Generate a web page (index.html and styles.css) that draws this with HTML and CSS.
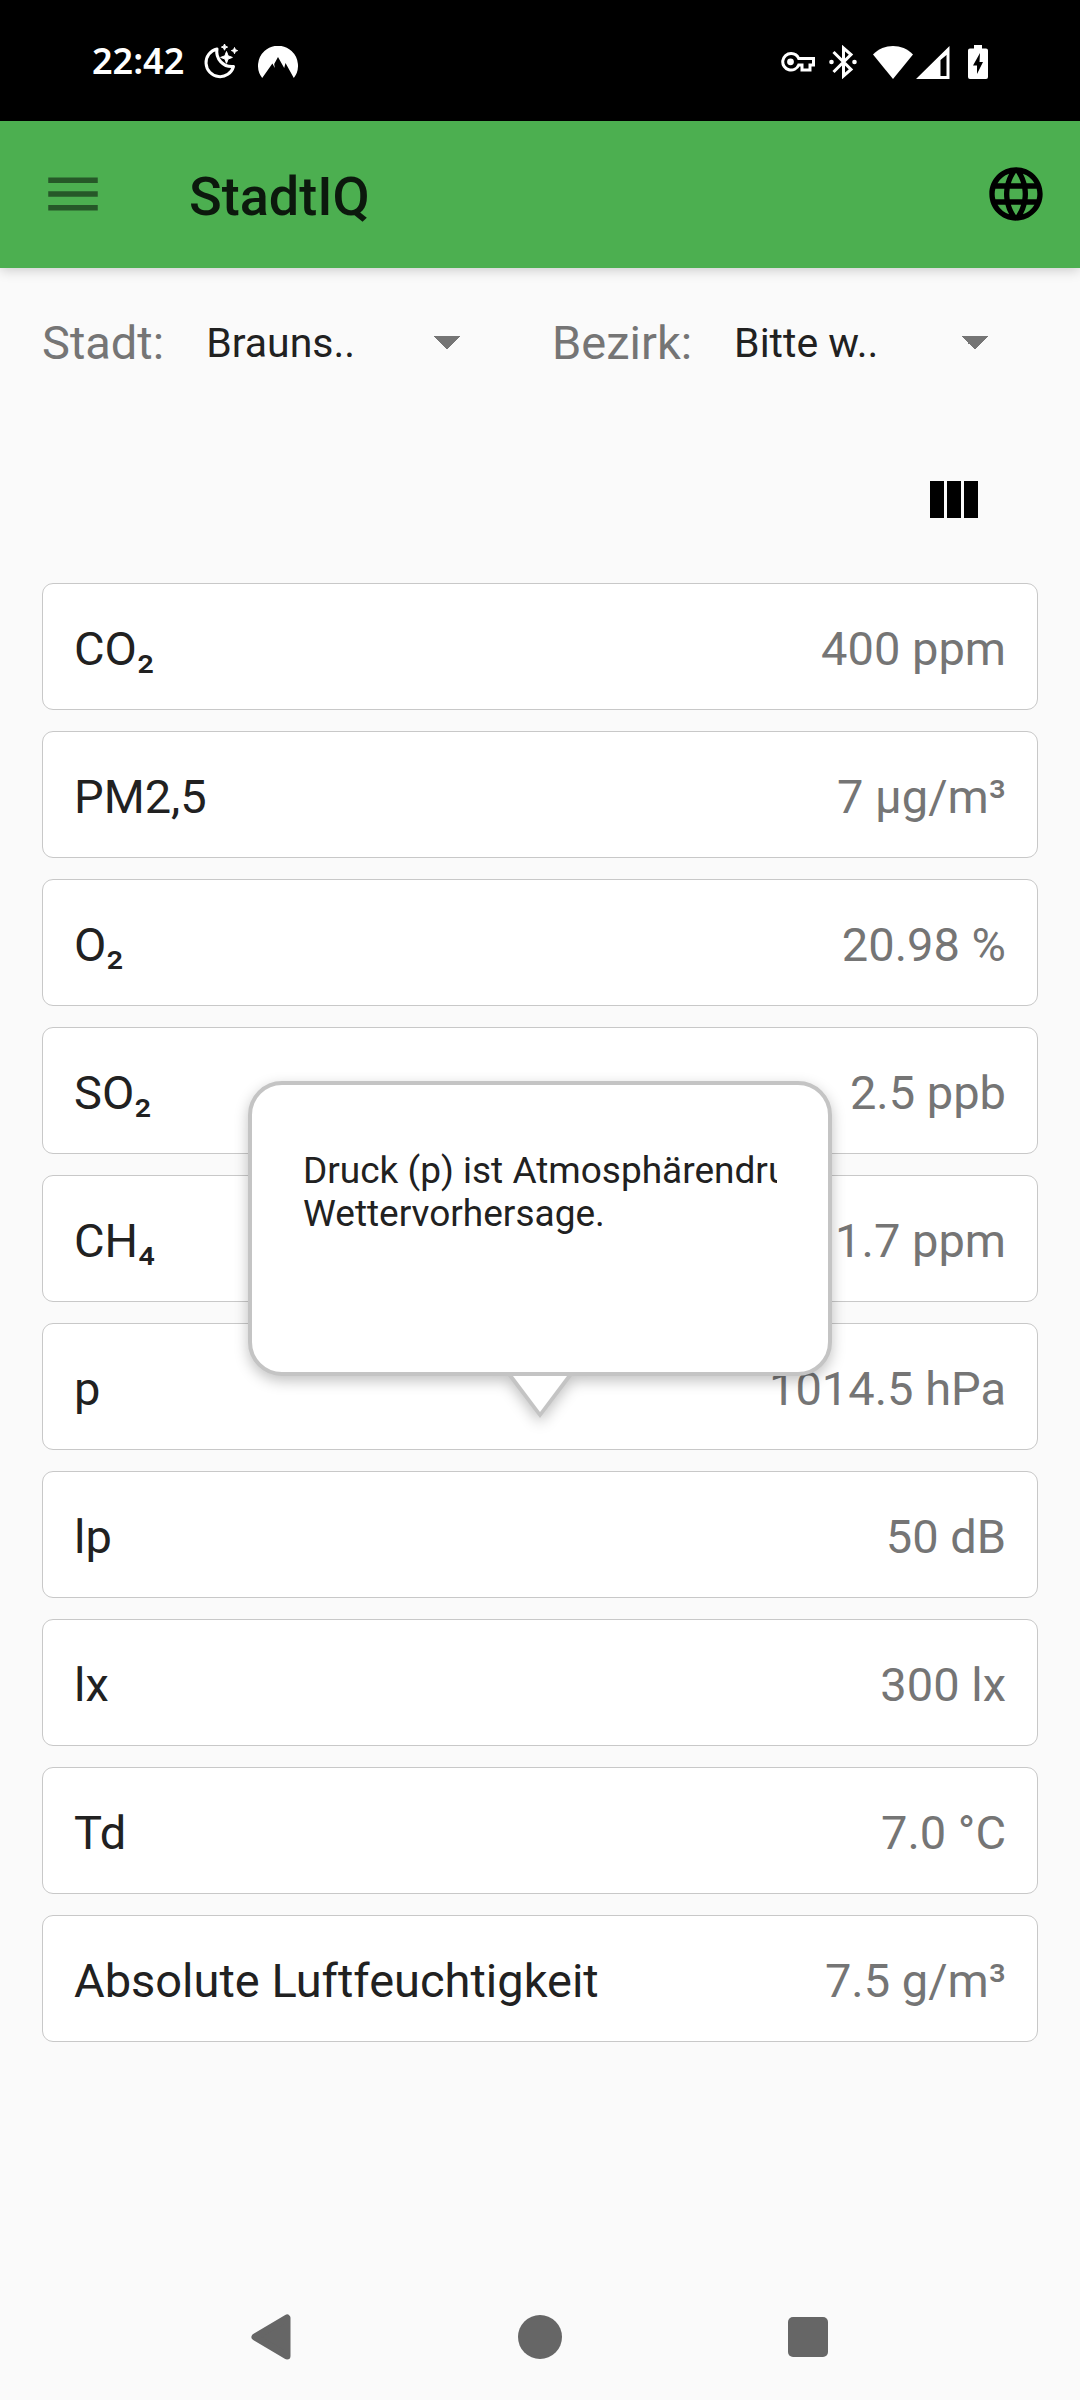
FILE: index.html
```html
<!DOCTYPE html>
<html lang="de">
<head>
<meta charset="utf-8">
<meta name="viewport" content="width=device-width, initial-scale=1">
<title>StadtIQ</title>
<link rel="stylesheet" href="styles.css">
</head>
<body>
<div class="screen">
  <div class="status">
    <div class="status-left">
      <time class="clock">22:42</time>
      <svg class="moon" viewBox="0 0 34 36" width="34" height="36" aria-hidden="true">
        <path d="M13 5A14 14 0 1 0 29.500 22.500A15 15 0 0 1 13 5Z" fill="none" stroke="#fff" stroke-width="3" stroke-linejoin="round"/>
        <path d="M22.500 7.500l1.600 4.300 4.300 1.600-4.300 1.600-1.600 4.300-1.600-4.300-4.300-1.600 4.300-1.600zM20.500 0l.9 2.200 2.200.9-2.200.9-.9 2.200-.9-2.200-2.200-.9 2.200-.9zM30.500 3.500l.9 2.200 2.200.9-2.200.9-.9 2.200-.9-2.200-2.200-.9 2.200-.9z" fill="#fff" stroke="#fff" stroke-width="1"/>
      </svg>
      <svg class="peak" viewBox="0 0 40 32" width="40" height="32" aria-hidden="true">
        <path d="M4.200 32A20 20 0 1 1 35.800 32L27.500 17l-1.300 5L20 11l-3.800 7 .6 4-2.400-4.500z" fill="#fff"/>
      </svg>
    </div>
    <div class="status-right">
      <svg viewBox="0 0 34 20" width="34" height="20" aria-hidden="true">
        <path d="M10 1.500a8.300 8.300 0 1 0 7.700 11.500H21v5h8v-5h3.500V6.500H17.700A8.300 8.300 0 0 0 10 1.500Z" fill="none" stroke="#fff" stroke-width="3"/>
        <circle cx="9.500" cy="9.800" r="3.400" fill="#fff"/>
      </svg>
      <svg class="bt" viewBox="0 0 28 34" width="28" height="34" aria-hidden="true">
        <path d="M4.500 7L22 24.500 14.500 31V3L22 9.500 4.500 27" fill="none" stroke="#fff" stroke-width="3"/>
        <circle cx="2.500" cy="17" r="2.300" fill="#fff"/><circle cx="25.500" cy="17" r="2.300" fill="#fff"/>
      </svg>
      <svg class="wifi" viewBox="0 0 40 33" width="40" height="33" aria-hidden="true">
        <path d="M20 33L0 8.500C11-2.800 29-2.800 40 8.500z" fill="#fff"/>
      </svg>
      <svg class="signal" viewBox="0 0 34 33" width="34" height="33" aria-hidden="true">
        <path d="M33.500 0v33H0zM30.500 9L24.500 14v16h6z" fill="#fff" fill-rule="evenodd"/>
      </svg>
      <svg class="battery" viewBox="0 0 20 34" width="20" height="34" aria-hidden="true">
        <path d="M6 0h8v3.500h4a2 2 0 0 1 2 2V32a2 2 0 0 1-2 2H2a2 2 0 0 1-2-2V5.500a2 2 0 0 1 2-2h4zM12 8L5 20.500h4V29l6-12h-3.500z" fill="#fff" fill-rule="evenodd"/>
      </svg>
    </div>
  </div>

  <header class="appbar">
    <button class="icon-button" type="button" aria-label="Menü">
      <svg class="menu-icon" viewBox="0 0 24 24" width="66" height="66"><path d="M3 18h18v-2H3zM3 13h18v-2H3zM3 6v2h18V6z"/></svg>
    </button>
    <h1 class="title">StadtIQ</h1>
    <button class="icon-button" type="button" aria-label="Sprache">
      <svg viewBox="0 0 24 24" width="64" height="64"><path d="M11.990 2C6.470 2 2 6.480 2 12s4.470 10 9.990 10C17.520 22 22 17.520 22 12S17.520 2 11.990 2zm6.930 6h-2.950a15.650 15.650 0 0 0-1.380-3.560A8.030 8.030 0 0 1 18.920 8zM12 4.040c.83 1.200 1.480 2.530 1.910 3.960h-3.820c.43-1.430 1.080-2.760 1.910-3.960zM4.260 14C4.100 13.360 4 12.690 4 12s.1-1.360.26-2h3.380c-.08.66-.14 1.320-.14 2s.06 1.340.14 2zm.82 2h2.950c.32 1.250.78 2.450 1.380 3.560A7.990 7.990 0 0 1 5.080 16zm2.950-8H5.080a7.990 7.990 0 0 1 4.330-3.560A15.650 15.650 0 0 0 8.030 8zM12 19.960c-.83-1.200-1.480-2.530-1.910-3.960h3.820c-.43 1.430-1.080 2.760-1.910 3.960zM14.340 14H9.660c-.09-.66-.16-1.320-.16-2s.07-1.350.16-2h4.680c.09.65.16 1.320.16 2s-.07 1.340-.16 2zm.25 5.560c.6-1.110 1.060-2.310 1.380-3.560h2.950a8.030 8.030 0 0 1-4.330 3.560zM16.360 14c.08-.66.14-1.320.14-2s-.06-1.340-.14-2h3.380c.16.640.26 1.310.26 2s-.1 1.360-.26 2z"/></svg>
    </button>
  </header>

  <main class="content">
    <form class="filters">
      <div class="filter filter-city">
        <label class="filter-label" for="stadt">Stadt:</label>
        <select class="filter-select" id="stadt"><option>Brauns..</option></select>
      </div>
      <div class="filter">
        <label class="filter-label" for="bezirk">Bezirk:</label>
        <select class="filter-select" id="bezirk"><option>Bitte w..</option></select>
      </div>
    </form>

    <div class="toolbar">
      <button class="icon-button" type="button" aria-label="Spaltenansicht">
        <svg viewBox="0 0 48 37" width="48" height="37"><path d="M0 0h14v37H0zM17 0h14v37H17zM34 0h14v37H34z"/></svg>
      </button>
    </div>

    <ul class="readings">
      <li class="reading"><span>CO₂</span><span class="value">400 ppm</span></li>
      <li class="reading"><span>PM2,5</span><span class="value">7 µg/m³</span></li>
      <li class="reading"><span>O₂</span><span class="value">20.98 %</span></li>
      <li class="reading"><span>SO₂</span><span class="value">2.5 ppb</span></li>
      <li class="reading"><span>CH₄</span><span class="value">1.7 ppm</span></li>
      <li class="reading"><span>p</span><span class="value">1014.5 hPa</span>
        <div class="tooltip" role="tooltip">
          <p class="tooltip-text">Druck (p) ist Atmosphärendruck<br>Wettervorhersage.</p>
          <svg class="tooltip-tail" viewBox="0 0 64 42" width="64" height="42" aria-hidden="true">
            <path d="M0 0h64L32 42z" fill="#c4c4c4"/><path d="M5 0h54L32 36z" fill="#fff"/>
          </svg>
        </div>
      </li>
      <li class="reading"><span>lp</span><span class="value">50 dB</span></li>
      <li class="reading"><span>lx</span><span class="value">300 lx</span></li>
      <li class="reading"><span>Td</span><span class="value">7.0 °C</span></li>
      <li class="reading"><span>Absolute Luftfeuchtigkeit</span><span class="value">7.5 g/m³</span></li>
    </ul>
  </main>

  <nav class="navbar" aria-label="System">
    <button class="icon-button" type="button" aria-label="Zurück">
      <svg viewBox="0 0 44 46" width="44" height="46"><path d="M37 4v38L5 23z" stroke="#666" stroke-width="7" stroke-linejoin="round" fill="#666"/></svg>
    </button>
    <button class="icon-button" type="button" aria-label="Startseite">
      <svg viewBox="0 0 44 44" width="44" height="44"><circle cx="22" cy="22" r="22" fill="#666"/></svg>
    </button>
    <button class="icon-button" type="button" aria-label="Übersicht">
      <svg viewBox="0 0 44 44" width="44" height="44"><rect x="2" y="2" width="40" height="40" rx="5" fill="#666"/></svg>
    </button>
  </nav>
</div>
</body>
</html>
```
FILE: styles.css
```css
* {
  box-sizing: border-box;
}

body {
  margin: 0;
  background: #fafafa;
  color: #212121;
  font-family: Roboto, "Liberation Sans", sans-serif;
  font-size: 47px;
  line-height: 56px;
}

svg {
  display: block;
  flex: none;
}

.screen {
  display: flex;
  flex-direction: column;
  min-height: 100vh;
}

.icon-button {
  display: flex;
  margin: 0;
  padding: 0;
  border: 0;
  background: none;
  color: inherit;
}

/* System status bar */
.status {
  display: flex;
  justify-content: space-between;
  align-items: center;
  height: 121px;
  padding: 3px 92px 0;
  background: #000;
  color: #fff;
}

.status-left,
.status-right {
  display: flex;
  align-items: center;
}

.clock {
  padding-bottom: 2px;
  font-family: "Noto Sans", sans-serif;
  font-size: 36px;
  font-weight: 600;
  line-height: 40px;
}

.moon {
  margin-left: 20px;
}

.peak {
  margin-left: 20px;
}

.bt {
  margin-left: 14px;
}

.wifi {
  margin-left: 16px;
}

.signal {
  margin-left: 3px;
}

.battery {
  margin-left: 18px;
}

/* App bar */
.appbar {
  display: flex;
  align-items: center;
  height: 147px;
  padding: 0 32px 2px 40px;
  background: #4caf50;
  box-shadow: 0 2px 12px rgba(0, 0, 0, 0.2);
}

.menu-icon {
  fill: #265828;
}

.title {
  flex: 1;
  margin: 6px 0 0 83px;
  color: #0c190d;
  font-size: 54px;
  font-weight: 500;
  line-height: 64px;
}

/* Content */
.content {
  flex: 1;
  padding: 0 42px;
}

.filters {
  display: grid;
  grid-template-columns: 510px 1fr;
  padding-top: 40px;
}

.filter {
  display: flex;
  align-items: center;
  gap: 42px;
  padding-right: 49px;
}

.filter-city {
  padding-right: 91px;
}

.filter-label {
  color: #757575;
}

.filter-select {
  flex: 1;
  min-width: 0;
  height: 70px;
  padding: 0;
  border: 0;
  appearance: none;
  background: conic-gradient(from -45deg at 50% 100%, #757575 25%, transparent 0) right center / 28px 14px no-repeat;
  color: #212121;
  font-family: inherit;
  font-size: 41px;
}

.toolbar {
  display: flex;
  justify-content: flex-end;
  padding: 103px 60px 65px 0;
}

.readings {
  display: flex;
  flex-direction: column;
  gap: 21px;
  margin: 0;
  padding: 0;
  list-style: none;
}

.reading {
  position: relative;
  display: flex;
  justify-content: space-between;
  align-items: center;
  height: 127px;
  padding: 4px 31px 0;
  border: 1px solid #c8c8c8;
  border-radius: 11px;
  background: #fff;
}

.value {
  color: #757575;
}

/* Speech bubble over the list, pointing at its row */
.tooltip {
  position: absolute;
  bottom: 73px;
  left: 50%;
  width: 584px;
  height: 295px;
  margin-left: -292px;
  padding: 64px 51px;
  border: 4px solid #c4c4c4;
  border-radius: 34px;
  background: #fff;
  filter: drop-shadow(0 5px 7px rgba(0, 0, 0, 0.24));
}

.tooltip-text {
  margin: 0;
  overflow: hidden;
  font-size: 37px;
  line-height: 43px;
  white-space: nowrap;
}

.tooltip-tail {
  position: absolute;
  top: 100%;
  left: 50%;
  margin: 4px 0 0 -32px;
}

/* System navigation */
.navbar {
  display: flex;
  justify-content: center;
  align-items: center;
  gap: 224px;
  height: 126px;
}
```
